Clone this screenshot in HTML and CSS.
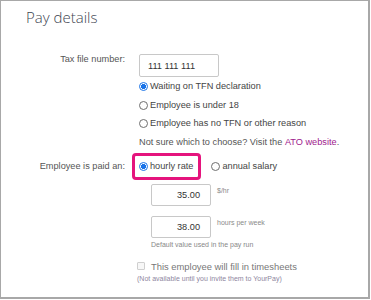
FILE: index.html
```html
<!DOCTYPE html>
<html lang="en">
<head>
    <meta charset="UTF-8">
    <meta name="viewport" content="width=device-width, initial-scale=1.0">
    <title>Pay details</title>
    <link rel="stylesheet" href="styles.css">
</head>
<body>
<div class="card">
    <h1 class="title">Pay details</h1>

    <div class="row tfn-row">
        <div class="label">Tax file number:</div>
        <div class="field">
            <div class="text-input tfn">111 111 111</div>
            <div class="option"><span class="radio checked"></span>Waiting on TFN declaration</div>
            <div class="option"><span class="radio"></span>Employee is under 18</div>
            <div class="option"><span class="radio"></span>Employee has no TFN or other reason</div>
            <div class="option hint">Not sure which to choose? Visit the&nbsp;<a href="#">ATO website</a>.</div>
        </div>
    </div>

    <div class="row paid-row">
        <div class="label">Employee is paid an:</div>
        <div class="paid-options">
            <div class="option highlight"><span class="radio checked"></span>hourly rate</div>
            <div class="option"><span class="radio"></span>annual salary</div>
        </div>
    </div>

    <div class="amounts">
        <div class="amount">
            <div class="text-input num">35.00</div>
            <span class="unit">$/hr</span>
        </div>
        <div class="amount second">
            <div class="text-input num">38.00</div>
            <span class="unit">hours per week</span>
        </div>
        <div class="note">Default value used in the pay run</div>
    </div>

    <div class="timesheets">
        <div class="check-row"><span class="checkbox"></span>This employee will fill in timesheets</div>
        <div class="note muted">(Not available until you invite them to YourPay)</div>
    </div>
</div>
</body>
</html>
```

FILE: styles.css
```css
body {
    margin: 0;
    padding: 0;
    background-color: #fff;
    font-family: "Liberation Sans", Arial, sans-serif;
    font-size: 9.2px;
    color: #555;
}
.card {
    box-sizing: border-box;
    width: 370px;
    height: 299px;
    border: 1px solid #a8a8a8;
    border-width: 1px 2px 2px 1px;
}
.title {
    margin: 0;
    padding: 6px 0 0 25px;
    font-family: "Open Sans", sans-serif;
    font-weight: 300;
    font-size: 15px;
    line-height: 20px;
    color: #3d4450;
}
.row {
    display: grid;
    grid-template-columns: 124px 1fr;
    column-gap: 14px;
}
.label {
    text-align: right;
    line-height: 11px;
    color: #555;
}
.tfn-row {
    margin-top: 27px;
}
.text-input {
    box-sizing: border-box;
    height: 23px;
    border: 1px solid #c8c8c8;
    border-radius: 2px;
    display: flex;
    align-items: center;
    color: #333;
}
.tfn {
    width: 80px;
    padding-left: 8px;
}
.option {
    display: flex;
    align-items: center;
    height: 18.7px;
    line-height: 11px;
    color: #444;
}
.hint {
    color: #555;
}
.hint a {
    color: #a0208d;
    text-decoration: none;
}
.radio {
    box-sizing: border-box;
    width: 9px;
    height: 9px;
    border: 1px solid #6f6f6f;
    border-radius: 50%;
    margin-right: 2px;
    flex-shrink: 0;
    background-color: #fff;
}
.radio.checked {
    border-color: #1a73e8;
    background: radial-gradient(circle, #1a73e8 0, #1a73e8 2.3px, #fff 2.8px);
}
.paid-row {
    margin-top: 1px;
    align-items: center;
}
.paid-options {
    display: flex;
    align-items: center;
}
.highlight {
    box-sizing: border-box;
    height: 27px;
    margin-left: -7px;
    padding: 0 5px 0 4px;
    border: 3px solid #e5147d;
    border-radius: 4px;
}
.paid-options .option + .option {
    margin-left: 10px;
}
.amounts {
    margin: 4px 0 0 150px;
}
.amount {
    display: flex;
    align-items: flex-start;
}
.amount.second {
    margin-top: 10px;
}
.num {
    width: 60px;
    height: 22px;
    justify-content: flex-end;
    padding-right: 10px;
}
.unit {
    margin: 3px 0 0 6px;
    font-size: 7px;
    color: #8a8a8a;
}
.note {
    margin-top: 2px;
    font-size: 7px;
    line-height: 9px;
    color: #888;
}
.timesheets {
    margin: 12px 0 0 136px;
}
.check-row {
    display: flex;
    align-items: center;
    line-height: 11px;
    font-size: 9.4px;
    color: #777;
}
.checkbox {
    box-sizing: border-box;
    width: 8px;
    height: 8px;
    border: 1px solid #cfcfcf;
    border-radius: 1px;
    background-color: #f7f7f7;
    margin-right: 6px;
}
.muted {
    margin-top: 2px;
    color: #8e86a0;
}
```
